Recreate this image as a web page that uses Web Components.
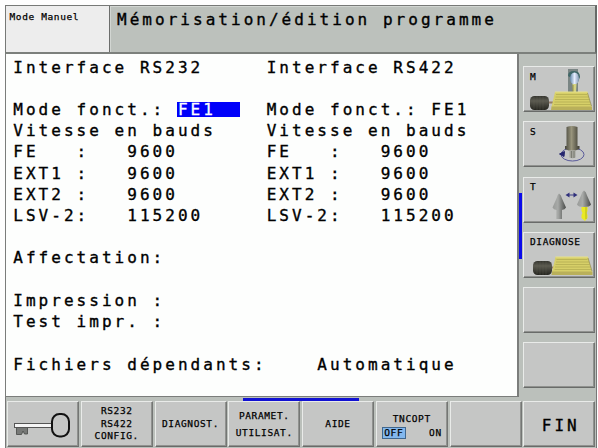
<!DOCTYPE html>
<html lang="fr">
<head>
<meta charset="utf-8">
<title>Mémorisation/édition programme</title>
<style>
  body {
    margin: 0;
    background: #fff;
    overflow: hidden;
  }
</style>
</head>
<body>
<tnc-screen></tnc-screen>

<script>
const define = (name, html) => {
  const template = document.createElement('template');
  // white-space: pre is inherited, so no line breaks between the tags
  template.innerHTML = html.trim().replace(/>\s+</g, '><');

  window.customElements.define(name, class extends HTMLElement {
    constructor() {
      super();
      this.attachShadow({ mode: 'open' });
      this.shadowRoot.appendChild(template.content.cloneNode(true));
    }
  });
}

// Title bar: machine mode on the left, programming mode on the right
define('mode-header', `
  <style>
    :host {
      display: flex;
      box-sizing: border-box;
      height: 49px;
      border: 1px solid #777977;
      border-bottom: 2px solid #7c807c;
      border-right: 2px solid #666a67;
      white-space: pre;
    }

    .manual {
      box-sizing: border-box;
      width: 104px;
      padding: 5px 0 0 3.5px;
      background: #ededed;
      border-right: 1px solid #6c6e6c;
      font-size: 9.5px;
      line-height: 12px;
      letter-spacing: 0.61px;
      -webkit-text-stroke: 0.25px #000;
    }

    .title {
      flex: 1;
      padding: 3px 0 0 7px;
      background: #bcc1bc;
      box-shadow: inset 1px 1px #d2d6d2;
      font-size: 16px;
      line-height: 22px;
      letter-spacing: 3.03px;
      -webkit-text-stroke: 0.35px #000;
    }
  </style>
  <div class="manual"><slot name="manual"></slot></div>
  <div class="title"><slot></slot></div>
`);

// One line of the form, the right half sits 20 characters further
define('form-row', `
  <style>
    :host {
      display: grid;
      grid-template-columns: 253.4px 1fr;
      height: 21.23px;
      line-height: 21.23px;
      white-space: pre;
    }
  </style>
  <slot name="left"></slot>
  <slot name="right"></slot>
`);

define('field-cursor', `
  <style>
    :host {
      display: inline-block;
      width: 63.5px;
      height: 15.5px;
      line-height: 15.5px;
      margin-left: -1px;
      text-indent: 1px;
      background: #0000fa;
      color: #fff;
      -webkit-text-stroke: 0.3px #fff;
    }
  </style>
  <slot></slot>
`);

define('soft-key', `
  <style>
    :host {
      display: flex;
      flex-direction: column;
      align-items: center;
      justify-content: center;
      box-sizing: border-box;
      width: 72px;
      height: 46px;
      background: #c5c6c5;
      border: 1px solid;
      border-color: #e9ebe9 #747674 #696b69 #e9ebe9;
      box-shadow: inset -1px -1px #90928f;
      font-size: 9.5px;
      line-height: 12.6px;
      letter-spacing: 0.61px;
      text-align: center;
      white-space: pre;
      -webkit-text-stroke: 0.25px #000;
    }

    :host([wide]) {
      line-height: 17px;
    }

    :host([large]) {
      font-size: 16px;
      letter-spacing: 3.03px;
      padding: 4px 0 0 3px;
      -webkit-text-stroke: 0.35px #000;
    }
  </style>
  <slot></slot>
`);

define('on-off', `
  <style>
    :host {
      display: flex;
      justify-content: space-between;
      width: 60px;
      line-height: 10px;
    }

    .off {
      width: 22px;
      border: 1px solid #40678e;
      background: #83b8ee;
    }

    .on {
      padding: 1px 0;
    }
  </style>
  <span class="off"><slot name="off"></slot></span>
  <span class="on"><slot name="on"></slot></span>
`);

// Key of the vertical bar: label in the corner, drawing over the whole key
define('machine-key', `
  <style>
    :host {
      display: grid;
      box-sizing: border-box;
      width: 72px;
      height: 46px;
      background: #c5c6c5;
      border: 1px solid;
      border-color: #e9ebe9 #747674 #696b69 #e9ebe9;
      box-shadow: inset -1px -1px #90928f;
      font-size: 9.5px;
      line-height: 12px;
      letter-spacing: 0.61px;
      -webkit-text-stroke: 0.25px #000;
    }

    .label, .icon {
      grid-area: 1 / 1;
    }

    .label {
      padding: 3.5px 0 0 6px;
    }

    .icon {
      height: 44px;
    }
  </style>
  <div class="icon"><slot name="icon"></slot></div>
  <div class="label"><slot></slot></div>
`);

define('motor-icon', `
  <style>
    :host, svg { display: block; }
    .spindle { display: none; }
    :host([spindle]) .spindle { display: inline; }
    :host([low]) .drive { transform: translate(3px, -1px); }
    :host([low]) .table { transform: translate(0.5px, -1px); }
  </style>
  <svg width="70" height="44" viewBox="0 0 70 44">
    <defs>
      <linearGradient id="body" x1="0" y1="0" x2="0" y2="1">
        <stop offset="0" stop-color="#34342e"/>
        <stop offset=".35" stop-color="#5c5b51"/>
        <stop offset="1" stop-color="#24241e"/>
      </linearGradient>
      <linearGradient id="ball">
        <stop offset="0" stop-color="#6489aa"/>
        <stop offset=".5" stop-color="#e6edff"/>
        <stop offset="1" stop-color="#8499b4"/>
      </linearGradient>
    </defs>
    <g class="spindle">
      <path d="M44 2h10v24H44z" fill="#7a8584"/>
      <path d="M44 9q0-5 6-5 6 0 6 6l-2 5" fill="#3f6667"/>
      <ellipse cx="50.5" cy="11.5" rx="4.5" ry="6" fill="url(#ball)"/>
      <path d="M48.5 17h4l-.5 8h-3z" fill="#d4d282"/>
      <path d="M49 18v7" stroke="#8e8d4a"/>
    </g>
    <g class="drive">
      <rect x="6" y="29" width="19" height="14" rx="4.5" fill="url(#body)"/>
      <path d="M10 30v12M13 29v14M16 29v14M19 29v14" stroke="#6a6858" stroke-width=".3"/>
      <path d="M25 35.5h4" stroke="#957d67" stroke-width="2"/>
    </g>
    <g class="table">
      <path d="M31 25h32.500l4 15H27.500z" fill="#d6cf68"/>
      <path d="M32 27.500h31M31.500 30h33M31 32.500h34M30.500 35h35.500M30 37.500h36.500" stroke="#aaa34a" stroke-width=".6"/>
      <path d="M31 25h32.500" stroke="#e7e28b"/>
      <path d="M63.500 26l4 13" stroke="#928d50" stroke-width=".7"/>
      <path d="M27.500 39.500h40.500V43H27z" fill="#b9b05a"/>
    </g>
  </svg>
`);

define('spindle-icon', `
  <style>
    :host, svg { display: block; }
  </style>
  <svg width="70" height="44" viewBox="0 0 70 44">
    <defs>
      <linearGradient id="steel">
        <stop offset="0" stop-color="#47473d"/>
        <stop offset=".45" stop-color="#98947c"/>
        <stop offset="1" stop-color="#3e3d34"/>
      </linearGradient>
    </defs>
    <ellipse cx="48.500" cy="32.500" rx="11.500" ry="6.500" fill="none" stroke="#5a5b9b" stroke-width="1"/>
    <path d="M42.500 5q5.500-2 11 0v19h2v3l-4 1.500h-7L41 27v-3h1.500z" fill="url(#steel)"/>
    <path d="M45.500 28.500h6v7q-3 1.500-6 0z" fill="#a2a29a"/>
    <path d="M47.500 29v7M50 29v7" stroke="#72736b" stroke-width=".8"/>
    <path d="M35.500 32l5-2.500-.5 5z" fill="#25266e" stroke="#25266e"/>
  </svg>
`);

define('tool-icon', `
  <style>
    :host, svg { display: block; }
  </style>
  <svg width="70" height="44" viewBox="0 0 70 44">
    <defs>
      <linearGradient id="cone">
        <stop offset="0" stop-color="#999b99"/>
        <stop offset=".4" stop-color="#a8aaa8"/>
        <stop offset="1" stop-color="#484a48"/>
      </linearGradient>
    </defs>
    <path d="M35 15.500q2 1 3 5l4 9q-1 2-4 2.500v9h-5.500v-9q-3-.5-4-2.500l4-9q1-4 2.500-5z" fill="url(#cone)"/>
    <path d="M57.500 29h6v4l-1 2 1 2v3l-2.500 3-3.500-3v-3l1-2-1-2z" fill="#eaea22"/>
    <path d="M62 29v12" stroke="#b6b619"/>
    <path d="M60 12.500q2 1 3 5l4 9q-1 2.500-7 2.500t-7-2.500l4-9q1-4 3-5z" fill="url(#cone)"/>
    <path d="M43 17h9" stroke="#414187"/>
    <path d="M41.500 17l4-2.500v5zM53.500 17l-4-2.500v5z" fill="#30317c"/>
  </svg>
`);

define('key-icon', `
  <style>
    :host, svg { display: block; }
  </style>
  <svg width="70" height="44" viewBox="0 0 70 44">
    <path d="M8.500 25.500h11v6.500h-3l-1.500-3-1.500 3.500h-5z" fill="#777977" stroke="#454745" stroke-width=".8"/>
    <rect x="6.500" y="21.500" width="37" height="4" fill="#f5f5f5" stroke="#555"/>
    <rect x="44" y="12" width="17" height="22.500" rx="7.500" fill="#c5c6c5" stroke="#111" stroke-width="2"/>
  </svg>
`);

define('tnc-screen', `
  <style>
    :host {
      display: flex;
      flex-direction: column;
      box-sizing: border-box;
      width: 598px;
      height: 448px;
      padding: 5px 0 0 5px;
      background: #fefefe;
      font-family: "DejaVu Sans Mono", monospace;
      color: #000;
      overflow: hidden;
    }

    mode-header {
      width: 592px;
      flex: none;
    }

    .middle {
      display: flex;
      width: 592px;
      height: 343px;
    }

    .form {
      box-sizing: border-box;
      width: 514px;
      padding: 2.5px 0 0 7.3px;
      border: solid #7b7d7b;
      border-width: 0 2px 1px 1px;
      background: #fdfefd;
      font-size: 16px;
      letter-spacing: 3.03px;
      -webkit-text-stroke: 0.35px #000;
    }

    .side {
      display: flex;
      flex: 1;
      background: #bbc0bb;
      border-right: 1px solid #777;
    }

    .keys {
      display: flex;
      flex-direction: column;
      gap: 9.3px;
      padding: 12px 0 0 1px;
    }

    .side-mark {
      width: 3px;
      height: 66px;
      margin-top: 139px;
      background: #0b0beb;
    }

    .bottom {
      display: flow-root;
      box-sizing: border-box;
      width: 592px;
      height: 51px;
      padding-left: 1px;
      background: #bbc0bb;
      border-left: 1px solid #777;
      border-right: 1px solid #777;
    }

    .bottom-mark {
      width: 116px;
      height: 3px;
      margin: 1px 0 0 236px;
      background: #1111d2;
    }

    .softkeys {
      display: flex;
      gap: 1.75px;
    }
  </style>

  <mode-header><span slot="manual">Mode Manuel</span>Mémorisation/édition programme</mode-header>

  <div class="middle">
    <div class="form">
      <form-row><span slot="left">Interface RS232</span><span slot="right">Interface RS422</span></form-row>
      <form-row></form-row>
      <form-row><span slot="left">Mode fonct.: <field-cursor>FE1</field-cursor></span><span slot="right">Mode fonct.: FE1</span></form-row>
      <form-row><span slot="left">Vitesse en bauds</span><span slot="right">Vitesse en bauds</span></form-row>
      <form-row><span slot="left">FE   :   9600</span><span slot="right">FE   :   9600</span></form-row>
      <form-row><span slot="left">EXT1 :   9600</span><span slot="right">EXT1 :   9600</span></form-row>
      <form-row><span slot="left">EXT2 :   9600</span><span slot="right">EXT2 :   9600</span></form-row>
      <form-row><span slot="left">LSV-2:   115200</span><span slot="right">LSV-2:   115200</span></form-row>
      <form-row></form-row>
      <form-row><span slot="left">Affectation:</span></form-row>
      <form-row></form-row>
      <form-row><span slot="left">Impression :</span></form-row>
      <form-row><span slot="left">Test impr. :</span></form-row>
      <form-row></form-row>
      <form-row><span slot="left">Fichiers dépendants:</span><span slot="right">    Automatique</span></form-row>
    </div>
    <div class="side">
      <div class="side-mark"></div>
      <div class="keys">
        <machine-key>M<motor-icon slot="icon" spindle></motor-icon></machine-key>
        <machine-key>S<spindle-icon slot="icon"></spindle-icon></machine-key>
        <machine-key>T<tool-icon slot="icon"></tool-icon></machine-key>
        <machine-key>DIAGNOSE<motor-icon slot="icon" low></motor-icon></machine-key>
        <machine-key></machine-key>
        <machine-key></machine-key>
      </div>
    </div>
  </div>

  <div class="bottom">
    <div class="bottom-mark"></div>
    <div class="softkeys">
      <soft-key><key-icon></key-icon></soft-key>
      <soft-key><span>RS232</span><span>RS422</span><span>CONFIG.</span></soft-key>
      <soft-key>DIAGNOST.</soft-key>
      <soft-key wide><span>PARAMET.</span><span>UTILISAT.</span></soft-key>
      <soft-key>AIDE</soft-key>
      <soft-key wide><span>TNCOPT</span><on-off><span slot="off">OFF</span><span slot="on">ON</span></on-off></soft-key>
      <soft-key></soft-key>
      <soft-key large>FIN</soft-key>
    </div>
  </div>
`);
</script>
</body>
</html>
